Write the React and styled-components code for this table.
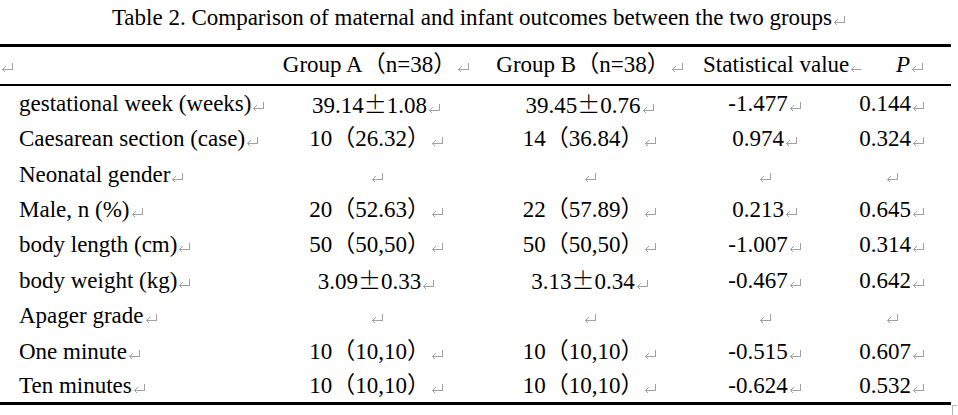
import React from 'react';
import styled, { createGlobalStyle } from 'styled-components';

const Global = createGlobalStyle`
  html, body {
    margin: 0;
    padding: 0;
    background: #fff;
    overflow: hidden;
  }
  body {
    font-family: "Liberation Serif", "Noto Sans CJK SC", serif;
    color: #000;
  }
`;

const Page = styled.div`
  width: 958px;
  height: 415px;
  position: relative;
`;

const Caption = styled.div`
  height: 36px;
  padding-top: 5px;
  box-sizing: border-box;
  text-align: center;
  font-size: 23px;
  line-height: 26px;
  white-space: nowrap;
`;

const Table = styled.table`
  margin-top: 8px;
  width: 951px;
  border-collapse: collapse;
  table-layout: fixed;
  font-size: 23px;
  border-top: 3px solid #000;
  border-bottom: 3px solid #000;
`;

const HeadRow = styled.tr`
  height: 39px;
  border-bottom: 2px solid #000;
`;

const Row = styled.tr`
  height: 35.45px;
`;

const Th = styled.th`
  font-weight: normal;
  white-space: nowrap;
  padding: 0;
  padding-left: ${p => p.$pl || 0}px;
  text-align: ${p => p.$align || 'center'};
  vertical-align: middle;
  line-height: 26px;
`;

const Td = styled.td`
  white-space: nowrap;
  padding: 3px 0 0;
  padding-left: ${p => p.$pl || 0}px;
  text-align: ${p => p.$align || 'center'};
  vertical-align: middle;
  line-height: 26px;
`;

const Italic = styled.span`
  font-style: italic;
`;

const Wide = styled.span`
  font-family: "Noto Sans CJK SC", sans-serif;
  font-weight: 300;
`;

const MarkSvg = styled.svg`
  display: inline-block;
  width: 13px;
  height: 12px;
  margin-left: 1px;
  vertical-align: 0px;
`;

const Corner = styled.div`
  position: absolute;
  left: 952px;
  top: 405px;
  width: 5px;
  height: 10px;
  border-left: 1px solid #b5b5b5;
  border-top: 1px solid #b5b5b5;
  box-sizing: border-box;
`;

// Word paragraph mark
const Mark = ({ plain }) => (
  <MarkSvg viewBox="0 0 13 12">
    <g fill="none" stroke="#a0a0a0" strokeWidth="1">
      <path d="M1.5 9.5 H11.5" />
      <path d="M5 6 L1.5 9.5 L5 13" />
      {!plain && <path d="M11.5 10 V3" />}
    </g>
  </MarkSvg>
);

const pm = (a, b) => (
  <>
    {a}
    <Wide>±</Wide>
    {b}
  </>
);

const rows = [
  ['gestational week (weeks)', pm('39.14', '1.08'), pm('39.45', '0.76'), '-1.477', '0.144'],
  ['Caesarean section (case)', '10（26.32）', '14（36.84）', '0.974', '0.324'],
  ['Neonatal gender', '', '', '', ''],
  ['Male, n (%)', '20（52.63）', '22（57.89）', '0.213', '0.645'],
  ['body length (cm)', '50（50,50）', '50（50,50）', '-1.007', '0.314'],
  ['body weight (kg)', pm('3.09', '0.33'), pm('3.13', '0.34'), '-0.467', '0.642'],
  ['Apager grade', '', '', '', ''],
  ['One minute', '10（10,10）', '10（10,10）', '-0.515', '0.607'],
  ['Ten minutes', '10（10,10）', '10（10,10）', '-0.624', '0.532'],
];

export default function App() {
  return (
    <Page>
      <Global />
      <Caption>
        Table 2. Comparison of maternal and infant outcomes between the two groups<Mark />
      </Caption>
      <Table>
        <colgroup>
          <col style={{ width: 270 }} />
          <col style={{ width: 213 }} />
          <col style={{ width: 214 }} />
          <col style={{ width: 136 }} />
          <col style={{ width: 118 }} />
        </colgroup>
        <thead>
          <HeadRow>
            <Th $align="left"><Mark /></Th>
            <Th>Group A（n=38）<Mark /></Th>
            <Th>Group B（n=38）<Mark /></Th>
            <Th $align="left" $pl={6}>Statistical value<Mark plain /></Th>
            <Th $align="left" $pl={63}><Italic>P</Italic><Mark /></Th>
          </HeadRow>
        </thead>
        <tbody>
          {rows.map((r, i) => (
            <Row key={i}>
              <Td $align="left" $pl={19}>{r[0]}<Mark /></Td>
              <Td>{r[1]}<Mark /></Td>
              <Td>{r[2]}<Mark /></Td>
              <Td>{r[3]}<Mark /></Td>
              <Td>{r[4]}<Mark /></Td>
            </Row>
          ))}
        </tbody>
      </Table>
      <Corner />
    </Page>
  );
}
